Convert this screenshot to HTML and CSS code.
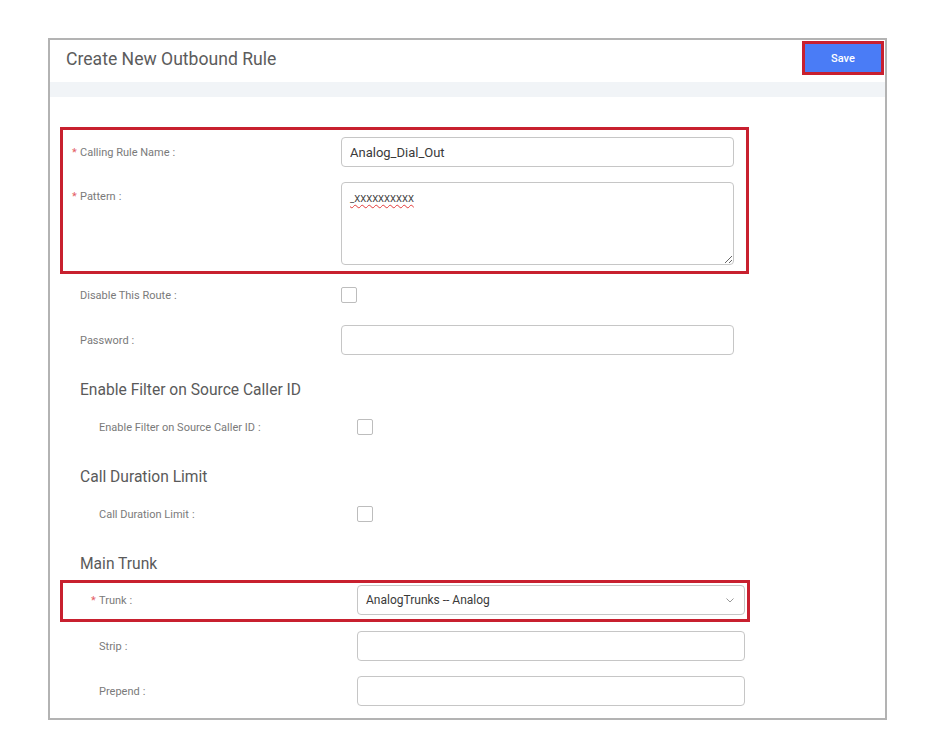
FILE: index.html
```html
<!DOCTYPE html>
<html lang="en">
<head>
  <meta charset="UTF-8" />
  <title>Create New Outbound Rule</title>
  <link rel="stylesheet" href="styles.css">
</head>
<body>

  <div class="panel">
    <!-- Header -->
    <div class="panel-header">
      <h1 class="title">Create New Outbound Rule</h1>
      <button class="save-btn marked">Save</button>
    </div>
    <div class="band"></div>

    <div class="form-body">
      <!-- Basic settings -->
      <div class="marked-box">
        <div class="row">
          <label class="label req">Calling Rule Name</label>
          <input class="field" type="text" value="Analog_Dial_Out" />
        </div>
        <div class="row row-top">
          <label class="label req">Pattern</label>
          <div class="field area"><span class="misspelled">_XXXXXXXXXX</span></div>
        </div>
      </div>

      <div class="plain after-box">
        <div class="row row-check">
          <label class="label">Disable This Route</label>
          <span class="check"></span>
        </div>
        <div class="row">
          <label class="label">Password</label>
          <input class="field" type="text" />
        </div>
      </div>

      <!-- Filter -->
      <h2 class="section">Enable Filter on Source Caller ID</h2>
      <div class="plain nested first">
        <div class="row row-check">
          <label class="label">Enable Filter on Source Caller ID</label>
          <span class="check"></span>
        </div>
      </div>

      <!-- Duration -->
      <h2 class="section">Call Duration Limit</h2>
      <div class="plain nested first">
        <div class="row row-check">
          <label class="label">Call Duration Limit</label>
          <span class="check"></span>
        </div>
      </div>

      <!-- Trunk -->
      <h2 class="section">Main Trunk</h2>
      <div class="marked-box trunk-box nested">
        <div class="row">
          <label class="label req">Trunk</label>
          <div class="field select">
            <span>AnalogTrunks -- Analog</span>
            <svg width="8" height="5" viewBox="0 0 8 5"><path d="M0.5 0.5 L4 4 L7.5 0.5" fill="none" stroke="#999" stroke-width="1"/></svg>
          </div>
        </div>
      </div>
      <div class="plain nested tail">
        <div class="row">
          <label class="label">Strip</label>
          <input class="field" type="text" />
        </div>
        <div class="row">
          <label class="label">Prepend</label>
          <input class="field" type="text" />
        </div>
      </div>
    </div>
  </div>

</body>
</html>
```

FILE: styles.css
```css
body {
  margin: 0;
  background: #fff;
  font-family: Roboto, "Liberation Sans", sans-serif;
}

.panel {
  margin: 38px 0 0 48px;
  width: 839px;
  height: 682px;
  border: 2px solid #b3b3b3;
  box-sizing: border-box;
  overflow: hidden;
}

.panel-header {
  display: flex;
  justify-content: space-between;
  align-items: flex-start;
  height: 42px;
  padding: 0 4px 0 16px;
}

.title {
  margin: 9px 0 0 0;
  font-size: 17.6px;
  font-weight: 400;
  color: #5c5c5c;
}

.save-btn {
  margin-top: 4px;
  width: 76px;
  height: 28px;
  background: #4a7cf6;
  color: #fff;
  border: none;
  font-family: inherit;
  font-size: 11px;
  font-weight: 500;
}

.marked {
  outline: 3px solid #c8202f;
}

.band {
  height: 15px;
  background: #f1f4f7;
}

.form-body {
  padding: 30px 0 0 10px;
}

/* red highlight frame around fields */
.marked-box {
  width: 689px;
  border: 3px solid #c8202f;
  box-sizing: border-box;
  padding: 7px 0 6px 17px;
}

.marked-box .row:last-child {
  margin-bottom: 0;
}

.plain {
  padding-left: 20px;
}

.after-box {
  margin-top: 6px;
}

.row {
  display: flex;
  align-items: center;
  margin-bottom: 15px;
}

.row-top {
  align-items: flex-start;
}

.row-top .label {
  padding-top: 8px;
}

.label {
  width: 261px;
  flex-shrink: 0;
  font-size: 11px;
  color: #7a7a7a;
}

.label::after {
  content: ":";
  margin-left: 3px;
}

.req::before {
  content: "*";
  display: inline-block;
  width: 8px;
  margin-left: -8px;
  color: #e35d65;
}

.field {
  width: 393px;
  height: 30px;
  box-sizing: border-box;
  border: 1px solid #c6c6c6;
  border-radius: 4px;
  padding: 0 8px;
  font-family: inherit;
  font-size: 13px;
  color: #3a3a3a;
  background: #fff;
}

.area {
  height: 83px;
  padding-top: 10px;
  font-size: 9.5px;
  resize: vertical;
  overflow: auto;
}

.misspelled {
  text-decoration: underline wavy #e23b3b;
  text-decoration-thickness: 1px;
  text-underline-offset: 2px;
}

.row-check {
  height: 30px;
}

.check {
  width: 14px;
  height: 14px;
  border: 1px solid #bdbdbd;
  border-radius: 2px;
}

.section {
  margin: 25px 0 0 20px;
  height: 20px;
  line-height: 20px;
  font-size: 15.6px;
  font-weight: 400;
  color: #5a5a5a;
}

.nested .label {
  width: 258px;
}

.nested .field {
  width: 388px;
}

.plain.nested {
  padding-left: 39px;
}

.first {
  margin-top: 12px;
}

.first .row {
  margin-bottom: 0;
}

.trunk-box {
  width: 690px;
  margin-top: 6px;
  padding: 2px 0 4px 36px;
}

.select {
  display: flex;
  align-items: center;
  justify-content: space-between;
  padding-right: 10px;
  font-size: 12px;
}

.tail {
  margin-top: 9px;
}
```
